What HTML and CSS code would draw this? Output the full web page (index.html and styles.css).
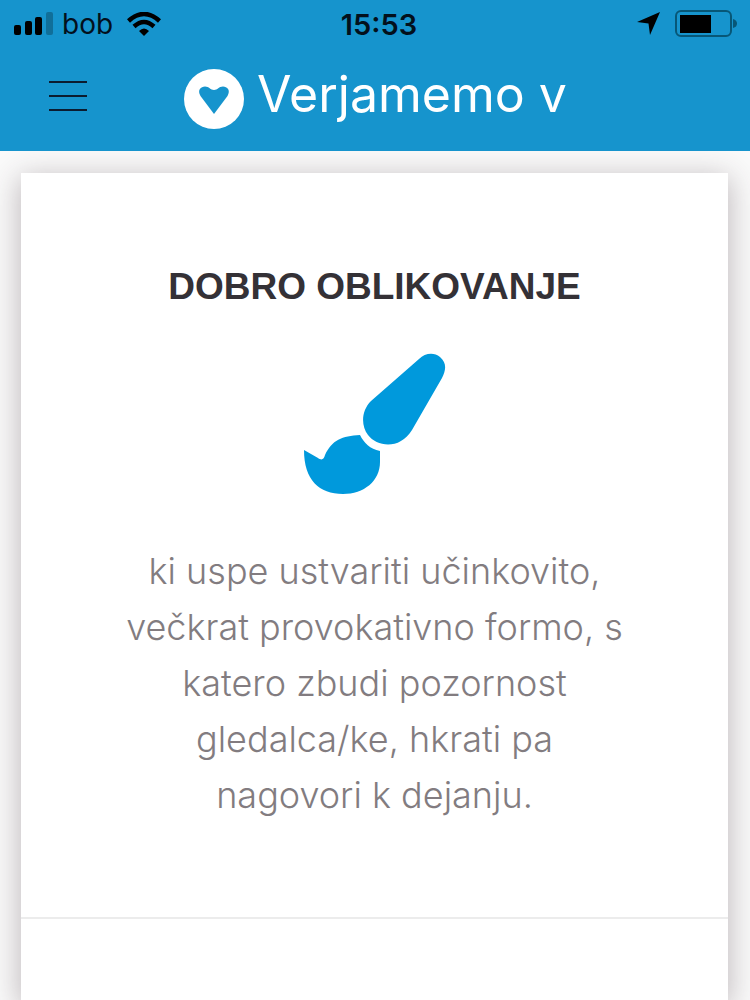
FILE: index.html
```html
<!DOCTYPE html>
<html lang="sl">
<head>
  <meta charset="UTF-8"/>
  <meta name="viewport" content="width=device-width,initial-scale=1"/>
  <title>Verjamemo v</title>
  <link rel="stylesheet" href="styles.css">
</head>
<body>

  <header class="header">
    <div class="status">
      <div class="status-left">
        <svg width="40" height="24" viewBox="0 0 40 24" aria-hidden="true">
          <rect x="0" y="13" width="7" height="10" rx="2"/>
          <rect x="11" y="9" width="7" height="14" rx="2"/>
          <rect x="21" y="5" width="7" height="18" rx="2"/>
          <rect x="32" y="0" width="7" height="23" rx="2" opacity=".25"/>
        </svg>
        <span class="carrier">bob</span>
        <svg width="34" height="24" viewBox="0 0 34 24" aria-hidden="true">
          <path d="M1.500 9Q17 -5 32.500 9" fill="none" stroke="#000" stroke-width="4.500"/>
          <path d="M7 14.500Q17 5.500 27 14.500" fill="none" stroke="#000" stroke-width="4.500"/>
          <path d="M12 19Q17 14 22 19L17 24Z"/>
        </svg>
      </div>
      <time class="clock">15:53</time>
      <div class="status-right">
        <svg width="24" height="24" viewBox="0 0 24 24" aria-hidden="true">
          <path d="M23 0L13 23L11.500 11.500L0 10Z"/>
        </svg>
        <svg width="63" height="28" viewBox="0 0 63 28" aria-hidden="true">
          <rect x="1" y="1" width="55" height="25" rx="5" fill="none" stroke="#075777" stroke-width="2"/>
          <rect x="5" y="5" width="31" height="18"/>
          <path d="M58 9Q62 10 62 13.500Q62 17 58 18Z" fill="#075777"/>
        </svg>
      </div>
    </div>

    <div class="navbar">
      <button type="button" class="menu-btn" aria-label="Meni">
        <svg width="38" height="32" viewBox="0 0 38 32" aria-hidden="true">
          <path d="M0 2H38M0 16H38M0 30H38" stroke="#0b1c30" stroke-width="2"/>
        </svg>
      </button>
      <h1 class="title">
        <svg class="heart" width="62" height="62" viewBox="0 0 62 62" aria-hidden="true">
          <circle cx="31" cy="31" r="30" fill="#fff"/>
          <path d="M31 46L17.500 28C14 22 18 18.500 22 18.500C26 18.500 27.500 22 31 22C34.500 22 36 18.500 40 18.500C44 18.500 48 22 44.500 28Z" fill="#1694cd"/>
        </svg>
        <span>Verjamemo v</span>
      </h1>
    </div>
  </header>

  <main class="content">
    <section class="belief">
      <h2>DOBRO OBLIKOVANJE</h2>
      <svg class="brush" width="142" height="142" viewBox="0 0 142 142" aria-hidden="true">
        <path d="M115 6C121 0 130 -1 136 4C143 10 142 17 138 25L108 77C96 97 73 94 64 82C57 73 57 58 67 48Z"/>
        <path d="M0 97L14 105C18 108 20 106 21 102C28 87 38 83 56 82C60 90 66 96 76 98V109C76 128 60 141 39 141C15 141 0 127 0 97Z"/>
      </svg>
      <p>ki uspe ustvariti učinkovito, večkrat provokativno formo, s katero zbudi pozornost gledalca/ke, hkrati pa nagovori k dejanju.</p>
    </section>
  </main>

</body>
</html>
```
FILE: styles.css
```css
:root {
  --blue: #1694cd;
  --icon: #0099dc;
  --text: #827c80;
}

* { box-sizing: border-box; margin: 0; padding: 0; }

body {
  display: flex;
  flex-direction: column;
  min-height: 100vh;
  background: #fafafa;
  color: var(--text);
  font-family: Inter, "Liberation Sans", sans-serif;
}

svg {
  display: block;
  flex: none;
}

.header {
  background: var(--blue);
  height: 151px;
  position: relative;
  z-index: 1;
}

.status {
  display: grid;
  grid-template-columns: 1fr auto 1fr;
  align-items: center;
  height: 48px;
  padding: 0 12px 0 14px;
  color: #03101c;
}

.status-left, .status-right {
  display: flex;
  align-items: center;
  gap: 8px;
}

.carrier {
  font-size: 28px;
  margin-right: 6px;
}

.clock {
  padding-left: 6px;
  font-size: 29px;
  font-weight: 600;
}

.status-right {
  justify-content: flex-end;
  gap: 14px;
}

.navbar {
  display: grid;
  grid-template-columns: 1fr auto 1fr;
  align-items: center;
  height: 96px;
  padding: 0 49px;
}

.menu-btn {
  justify-self: start;
  background: none;
  border: none;
  cursor: pointer;
}

.title {
  display: flex;
  align-items: center;
  gap: 12px;
  color: #fff;
  font-size: 50px;
  font-weight: 400;
}

.heart {
  margin-top: 6px;
}

.title span {
  padding-bottom: 4px;
}

.content {
  flex: 1;
  margin: 22px 22px 0 21px;
  background: #fff;
  box-shadow: 0 6px 28px 2px rgba(60, 40, 50, 0.3);
}

.belief {
  display: flex;
  flex-direction: column;
  align-items: center;
  padding: 90px 32px 94px;
  border-bottom: 2px solid #ececec;
  text-align: center;
}

h2 {
  color: #343136;
  font: bold 37px/48px "Liberation Sans", sans-serif;
}

.brush {
  margin: 42px 0 48px;
  fill: var(--icon);
}

.belief p {
  max-width: 504px;
  font-size: 36px;
  font-weight: 300;
  line-height: 56px;
}
```
